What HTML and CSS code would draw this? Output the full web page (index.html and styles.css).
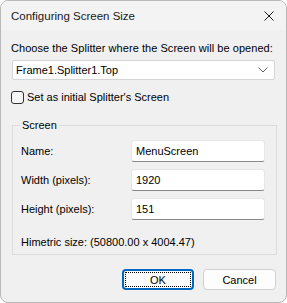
FILE: index.html
```html
<!DOCTYPE html>
<html lang="en">
<head>
  <meta charset="UTF-8">
  <title>Configuring Screen Size</title>
  <link rel="stylesheet" href="styles.css">
</head>
<body>
  <div class="window">
    <div class="titlebar">
      <span class="title">Configuring Screen Size</span>
      <svg class="close" width="10" height="10" viewBox="0 0 10 10">
        <path d="M0.5 0.5 L9.5 9.5 M9.5 0.5 L0.5 9.5" stroke="#1a1a1a" stroke-width="1" fill="none"/>
      </svg>
    </div>

    <div class="content">
      <div class="prompt">Choose the Splitter where the Screen will be opened:</div>

      <div class="combo">
        <span>Frame1.Splitter1.Top</span>
        <svg width="10" height="6" viewBox="0 0 10 6">
          <path d="M0.5 0.5 L5 5 L9.5 0.5" stroke="#606060" stroke-width="1" fill="none"/>
        </svg>
      </div>

      <label class="check-row">
        <span class="checkbox"></span>
        <span>Set as initial Splitter's Screen</span>
      </label>

      <fieldset class="group">
        <legend>Screen</legend>
        <div class="field">
          <span class="field-label">Name:</span>
          <div class="textbox">MenuScreen</div>
        </div>
        <div class="field">
          <span class="field-label">Width (pixels):</span>
          <div class="textbox">1920</div>
        </div>
        <div class="field">
          <span class="field-label">Height (pixels):</span>
          <div class="textbox">151</div>
        </div>
        <div class="himetric">Himetric size: (50800.00 x 4004.47)</div>
      </fieldset>

      <div class="buttons">
        <button class="btn btn-default"><span>OK</span></button>
        <button class="btn">Cancel</button>
      </div>
    </div>
  </div>
</body>
</html>
```

FILE: styles.css
```css
body {
  margin: 0;
  font-family: "Liberation Sans", Arial, sans-serif;
  font-size: 11px;
  color: #000;
  background: #ffffff;
}

.window {
  width: 287px;
  height: 303px;
  box-sizing: border-box;
  border: 1px solid #b8b8b8;
  border-radius: 8px;
  background: #f0f0f0;
  overflow: hidden;
  white-space: nowrap;
}

.titlebar {
  height: 29px;
  display: flex;
  align-items: center;
  justify-content: space-between;
  padding: 0 11px 0 10px;
  background: #f3f3f3;
}

.title {
  color: #1a1a1a;
  font-size: 11.5px;
}

.close {
  margin-right: 1px;
}

.content {
  padding: 10px 10px 0 10px;
}

.prompt {
  line-height: 16px;
  letter-spacing: 0.05px;
}

.combo {
  margin: 4px 1px 0 1px;
  height: 20px;
  box-sizing: border-box;
  border: 1px solid #d4d4d4;
  border-radius: 2px;
  background: #fff;
  display: flex;
  align-items: center;
  justify-content: space-between;
  padding: 0 6px 0 3px;
}

.check-row {
  display: flex;
  align-items: center;
  gap: 3px;
  margin-top: 9px;
  height: 16px;
}

.checkbox {
  width: 13px;
  height: 13px;
  box-sizing: border-box;
  border: 1px solid #333;
  border-radius: 3px;
  background: #f7f7f7;
}

.group {
  margin: 12px 0 0 1px;
  padding: 0 11px 4px 8px;
  border: 1px solid #dcdcdc;
  border-radius: 0;
}

.group legend {
  padding: 0 2px;
  margin-left: -1px;
  line-height: 16px;
}

.field {
  display: flex;
  align-items: center;
  margin-top: 7px;
}

.field:first-of-type {
  margin-top: 7px;
}

.field-label {
  width: 110px;
}

.textbox {
  width: 134px;
  height: 22px;
  box-sizing: border-box;
  border: 1px solid #e6e6e6;
  border-bottom-color: #8a8a8a;
  border-radius: 3px;
  background: #fff;
  padding: 0 4px;
  line-height: 20px;
}

.himetric {
  margin-top: 14px;
  line-height: 16px;
}

.buttons {
  display: flex;
  justify-content: flex-end;
  gap: 9px;
  margin: 14px 0 0 0;
}

.btn {
  width: 73px;
  height: 21px;
  box-sizing: border-box;
  font-family: inherit;
  font-size: 11px;
  color: #000;
  background: #fdfdfd;
  border: 1px solid #d0d0d0;
  border-radius: 4px;
  padding: 0;
}

.btn-default {
  width: 72px;
  border: 2px solid #0067c0;
  display: flex;
  padding: 1px;
}

.btn-default span {
  flex: 1;
  display: flex;
  align-items: center;
  justify-content: center;
  border: 1px dotted #000;
  border-radius: 1px;
}
```
